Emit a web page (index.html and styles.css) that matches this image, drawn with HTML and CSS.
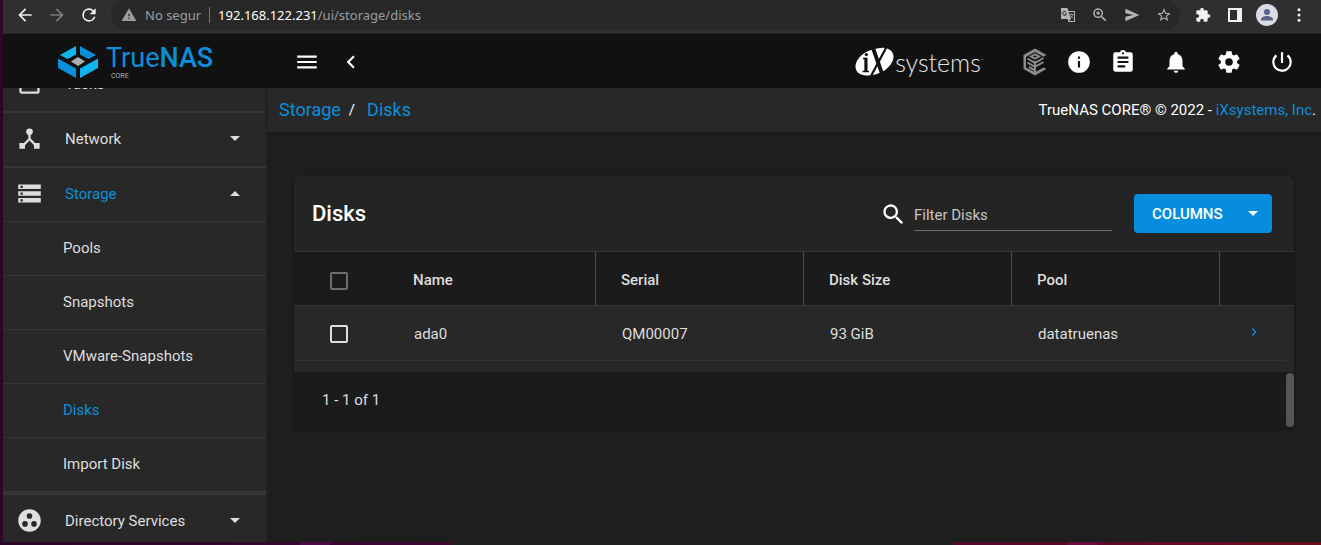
FILE: index.html
```
<!DOCTYPE html>
<html lang="en">
<head>
<meta charset="utf-8">
<title>TrueNAS - Disks</title>
<link rel="stylesheet" href="styles.css">
</head>
<body>
<div class="window">
  <div class="browser">
    <button class="b-btn" aria-label="Back"><svg viewBox="0 0 24 24"><path d="M20 11H7.8l5.6-5.6L12 4l-8 8 8 8 1.4-1.4L7.8 13H20z"/></svg></button>
    <button class="b-btn dim" aria-label="Forward"><svg viewBox="0 0 24 24"><path d="M12 4l-1.4 1.4L16.2 11H4v2h12.2l-5.6 5.6L12 20l8-8z"/></svg></button>
    <button class="b-btn" aria-label="Reload"><svg viewBox="0 0 24 24"><path d="M17.65 6.35A7.96 7.96 0 0 0 12 4a8 8 0 1 0 7.73 10h-2.08A6 6 0 1 1 12 6c1.66 0 3.14.69 4.22 1.78L13 11h7V4z"/></svg></button>
    <div class="address">
      <svg class="warn" viewBox="0 0 24 24"><path d="M1 21h22L12 2zm12-3h-2v-2h2zm0-4h-2v-4h2z"/></svg>
      <span class="insecure">No segur</span>
      <span class="url"><b>192.168.122.231</b>/ui/storage/disks</span>
      <span class="addr-tools">
        <button class="b-btn" aria-label="Translate"><svg class="soft" viewBox="0 0 16 16"><path d="M1 1h6.500l.9 3H15v11H8.500l-.9-3H1zM8.700 5l2.300 7-1.800 2H14V5z" fill-rule="evenodd"/><path d="M6.300 5.300A2 2 0 1 0 6.500 7H4.800" fill="none" stroke="#282828" stroke-width="1"/><path d="M9.500 7.500h4M11.500 6.500v1M12.800 7.500c-.3 1.500-1.200 2.500-2 3M10.500 8.500l2.500 3" fill="none" stroke="#b4b4b4" stroke-width=".8"/></svg></button>
        <button class="b-btn" aria-label="Zoom"><svg class="glass" viewBox="0 0 24 24"><path d="M15.500 14h-.79l-.28-.27A6.500 6.500 0 1 0 13.730 14.430l.27.28v.79l5 4.990L20.490 19zm-6 0a4.500 4.500 0 1 1 0-9 4.500 4.500 0 0 1 0 9zM10.300 7H8.700v1.700H7v1.600h1.700V12h1.600v-1.700H12V8.700h-1.700z"/></svg></button>
        <button class="b-btn" aria-label="Send"><svg class="soft" viewBox="0 0 24 24"><path d="M2 21.500L23 12 2 2.500V9.500L14 12 2 14.500z"/></svg></button>
        <button class="b-btn" aria-label="Bookmark"><svg class="soft" viewBox="0 0 24 24"><path d="M22 9.240l-7.190-.62L12 2 9.190 8.630 2 9.240l5.460 4.730L5.820 21 12 17.270 18.180 21l-1.630-7.030zM12 15.400l-3.760 2.270 1-4.280-3.320-2.880 4.380-.38L12 6.100l1.710 4.040 4.380.38-3.320 2.880 1 4.280z"/></svg></button>
      </span>
    </div>
    <button class="b-btn" aria-label="Extensions"><svg viewBox="0 0 24 24"><path d="M20.500 11H19V7a2 2 0 0 0-2-2h-4V3.500a2.500 2.500 0 0 0-5 0V5H4a2 2 0 0 0-2 2v3.800h1.500a2.700 2.700 0 0 1 0 5.400H2V20c0 1.100.9 2 2 2h3.800v-1.500a2.700 2.700 0 0 1 5.400 0V22H17a2 2 0 0 0 2-2v-4h1.500a2.500 2.500 0 0 0 0-5z"/></svg></button>
    <button class="b-btn" aria-label="Side panel"><svg viewBox="0 0 16 16"><path d="M1 1h14v14H1zm2 2v10h7V3z" fill-rule="evenodd"/></svg></button>
    <button class="avatar" aria-label="Profile"><svg viewBox="0 0 22 22"><circle cx="11" cy="11" r="11" fill="#dadce5"/><circle cx="11" cy="8" r="3" fill="#5a6285"/><path d="M5 16.500v-1c0-2 3-3.500 6-3.500s6 1.500 6 3.500v1z" fill="#5a6285"/></svg></button>
    <button class="b-btn last" aria-label="Menu"><svg viewBox="0 0 24 24"><circle cx="12" cy="5" r="2"/><circle cx="12" cy="12" r="2"/><circle cx="12" cy="19" r="2"/></svg></button>
  </div>

  <header class="topbar">
    <a class="brand" href="#">
      <svg class="brand-mark" viewBox="0 0 40 32">
        <path d="M18 0v8.500L9.500 13 2 9z" fill="#0db7ed"/><path d="M22 0v8.500l8.500 4.500L38 9z" fill="#0a8fdb"/>
        <path d="M0 12.500L18 22.500V32L0 22z" fill="#0a8fdb"/><path d="M40 12.500L22 22.500V32l18-10z" fill="#0db7ed"/>
        <path d="M20 11l7 4.500-7 4.500-7-4.500z" fill="#aeadae"/>
      </svg>
      <span class="brand-text"><span class="brand-name">True<b>NAS</b></span><span class="brand-sub">CORE</span></span>
    </a>
    <button class="t-btn" aria-label="Toggle menu"><svg viewBox="0 0 24 24"><path d="M3 18h18v-2H3zm0-5h18v-2H3zm0-7v2h18V6z"/></svg></button>
    <button class="t-btn" aria-label="Collapse"><svg viewBox="0 0 24 24"><path d="M15.410 7.410L14 6l-6 6 6 6 1.410-1.410L10.830 12z"/></svg></button>
    <a class="ix" href="#" aria-label="iXsystems">
      <svg class="ix-mark" viewBox="0 0 40 30">
        <path d="M26 1C33 0 38 4 38.500 9 39 17 29 28 13 28.500 5 29 .5 25 .5 19.500 1 10 12 2 26 1z" fill="#fff"/>
        <path d="M8 11.500h2.500V24M7.500 24.500h6.500" fill="none" stroke="#111" stroke-width="1.600"/><path d="M11 10.800V25" stroke="#111" stroke-width="3"/><circle cx="11.300" cy="7.600" r="1.600" fill="#111"/>
        <path d="M18 1l9.500 27" stroke="#111" stroke-width="3.800"/><path d="M31.500 0L16 29" stroke="#111" stroke-width="2.200"/>
      </svg>
      <span class="ix-name">systems</span><span class="ix-tm">™</span>
    </a>
    <button class="t-btn tool" aria-label="TrueCommand"><svg class="tc" viewBox="0 0 24 28"><path d="M12 .5L23.500 7l-3 1.800L12 4 3 9v10.500l9 4.800 8.500-4.800 3 1.500L12 27.500.5 21V7z" fill="#8b8b8b"/><path d="M12 5.200l6 3.300-6 3.300-6-3.300zm0 2.300l-2 1 2 1.100 2-1.100z" fill="#8b8b8b" fill-rule="evenodd"/><path d="M4.500 10.500l7.500 4.300 8.500-4.800M4.500 14.500l7.500 4.300 8.500-4.800M6 19l6 3.300M12 13v12" fill="none" stroke="#8b8b8b" stroke-width="2"/></svg></button>
    <button class="t-btn tool" aria-label="Info"><svg viewBox="0 0 24 24"><path d="M12 2a10 10 0 1 0 0 20 10 10 0 0 0 0-20zm1 15h-2v-6h2zm0-8h-2V7h2z"/></svg></button>
    <button class="t-btn tool" aria-label="Tasks"><svg viewBox="0 0 24 24"><path d="M19 3h-4.180C14.400 1.840 13.300 1 12 1s-2.400.84-2.820 2H5a2 2 0 0 0-2 2v14c0 1.100.9 2 2 2h14a2 2 0 0 0 2-2V5a2 2 0 0 0-2-2zm-7 0a1 1 0 1 1 0 2 1 1 0 0 1 0-2zm2 14H7v-2h7zm3-4H7v-2h10zm0-4H7V7h10z"/></svg></button>
    <span class="t-group">
      <button class="t-btn wide" aria-label="Alerts"><svg viewBox="0 0 24 24"><path d="M12 22a2 2 0 0 0 2-2h-4c0 1.100.89 2 2 2zm6-6v-5c0-3.070-1.640-5.640-4.500-6.320V4a1.500 1.500 0 0 0-3 0v.68C7.630 5.360 6 7.920 6 11v5l-2 2v1h16v-1z"/></svg></button>
      <button class="t-btn wide" aria-label="Settings"><svg viewBox="0 0 24 24"><path d="M19.430 12.980c.04-.32.07-.64.07-.98s-.03-.66-.07-.98l2.110-1.650c.19-.15.24-.42.12-.64l-2-3.460c-.12-.22-.39-.3-.61-.22l-2.490 1c-.52-.4-1.080-.73-1.690-.98l-.38-2.650C14.460 2.180 14.250 2 14 2h-4c-.25 0-.46.18-.49.42l-.38 2.650c-.61.25-1.170.59-1.690.98l-2.490-1c-.23-.09-.49 0-.61.22l-2 3.460c-.13.22-.07.49.12.64l2.110 1.650c-.04.32-.07.65-.07.98s.03.66.07.98l-2.110 1.650c-.19.15-.24.42-.12.64l2 3.460c.12.22.39.3.61.22l2.490-1c.52.4 1.080.73 1.690.98l.38 2.650c.03.24.24.42.49.42h4c.25 0 .46-.18.49-.42l.38-2.650c.61-.25 1.170-.59 1.690-.98l2.490 1c.23.09.49 0 .61-.22l2-3.460c.12-.22.07-.49-.12-.64zM12 15.500a3.500 3.500 0 1 1 0-7 3.500 3.500 0 0 1 0 7z"/></svg></button>
      <button class="t-btn wide" aria-label="Power"><svg viewBox="0 0 24 24"><path d="M13 3h-2v10h2zm4.830 2.170l-1.420 1.420A6.920 6.920 0 0 1 19 12a7 7 0 1 1-11.420-5.420L6.170 5.170A8.930 8.930 0 0 0 3 12a9 9 0 1 0 14.830-6.830z"/></svg></button>
    </span>
  </header>

  <div class="body">
    <nav class="side">
      <ul class="menu">
        <li><a href="#"><svg viewBox="0 0 24 24"><path d="M19 3H5a2 2 0 0 0-2 2v14c0 1.100.9 2 2 2h14a2 2 0 0 0 2-2V5a2 2 0 0 0-2-2zm0 16H5V8h14z"/></svg><span>Tasks</span></a></li>
        <li><a href="#"><svg viewBox="0 0 24 24"><path d="M17 16l-4-4V8.820C14.160 8.400 15 7.300 15 6a3 3 0 0 0-6 0c0 1.300.84 2.400 2 2.820V12l-4 4H3v5h5v-3.050l4-4.200 4 4.200V21h5v-5z"/></svg><span>Network</span><i class="caret"></i></a></li>
        <li class="open"><a class="active" href="#"><svg viewBox="0 0 24 24"><path d="M2 20h20v-4H2zm2-3h2v2H4zM2 4v4h20V4zm4 3H4V5h2zm-4 7h20v-4H2zm2-3h2v2H4z"/></svg><span>Storage</span><i class="caret up"></i></a>
          <ul class="sub">
            <li><a href="#">Pools</a></li>
            <li><a href="#">Snapshots</a></li>
            <li><a href="#">VMware-Snapshots</a></li>
            <li><a class="active" href="#">Disks</a></li>
            <li><a href="#">Import Disk</a></li>
          </ul>
        </li>
        <li><a href="#"><svg viewBox="0 0 24 24"><path d="M12 2a10 10 0 1 0 0 20 10 10 0 0 0 0-20zM8 17.500a2.500 2.500 0 1 1 0-5 2.500 2.500 0 0 1 0 5zM9.500 8a2.500 2.500 0 1 1 5 0 2.500 2.500 0 0 1-5 0zm6.500 9.500a2.500 2.500 0 1 1 0-5 2.500 2.500 0 0 1 0 5z"/></svg><span>Directory Services</span><i class="caret"></i></a></li>
      </ul>
    </nav>
    <main class="main">
      <div class="crumbs">
        <div class="trail"><a href="#">Storage</a><span>/</span><a href="#">Disks</a></div>
        <div class="copy">TrueNAS CORE® © 2022 - <a href="#">iXsystems, Inc</a>.</div>
      </div>
      <section class="card">
        <div class="card-head">
          <h1>Disks</h1>
          <svg class="search" viewBox="0 0 24 24"><path d="M15.500 14h-.79l-.28-.27A6.500 6.500 0 1 0 13.730 14.430l.27.28v.79l5 4.990L20.490 19zm-6 0a4.500 4.500 0 1 1 0-9 4.500 4.500 0 0 1 0 9z"/></svg>
          <input class="filter" type="text" aria-label="Filter Disks" placeholder="Filter Disks">
          <button class="columns">COLUMNS<i class="caret"></i></button>
        </div>
        <table class="grid">
          <colgroup><col class="c-check"><col><col><col><col><col class="c-more"></colgroup>
          <thead><tr><th><input class="dim" type="checkbox" aria-label="Select all"></th><th class="sep">Name</th><th class="sep">Serial</th><th class="sep">Disk Size</th><th class="sep">Pool</th><th></th></tr></thead>
          <tbody><tr><td><input type="checkbox" aria-label="Select ada0"></td><td>ada0</td><td>QM00007</td><td>93 GiB</td><td>datatruenas</td><td class="more"><button aria-label="Expand"><svg viewBox="0 0 24 24"><path d="M8.590 16.590L10 18l6-6-6-6-1.410 1.410L13.170 12z"/></svg></button></td></tr></tbody>
        </table>
        <div class="card-foot">1 - 1 of 1<span class="thumb"></span></div>
      </section>
    </main>
  </div>
</div>
</body>
</html>
```
FILE: styles.css
```
* { box-sizing: border-box; }
body {
  margin: 0;
  height: 100vh;
  overflow: hidden;
  padding: 0 0 3px 3px;
  font-family: Roboto, sans-serif;
  font-size: 15px;
  color: #dedede;
  background:
    linear-gradient(#202020, #202020) 451px 100% / 38% 3px no-repeat,
    linear-gradient(#4f0a4c, #4f0a4c) 300px 100% / 30px 3px no-repeat,
    linear-gradient(#690f40, #690f40) 1067px 100% / 30px 3px no-repeat,
    linear-gradient(90deg, #2d0628, #3c0733 30%, #55082c 75%, #68101d);
}
a { color: #0a8fdb; text-decoration: none; }
button { border: 0; padding: 0; margin: 0; background: none; font: inherit; color: inherit; }
svg { display: block; fill: currentColor; }
ul { list-style: none; margin: 0; padding: 0; }
.window { height: 100%; display: flex; flex-direction: column; background: #1e1e1e; overflow: hidden; }

.browser {
  flex: none;
  display: flex;
  align-items: center;
  height: 34px;
  padding: 0 6px 4px 6px;
  background: #2f2f2f;
  border-bottom: 1px solid #242424;
  font-family: "Noto Sans", sans-serif;
  font-size: 13px;
  color: #f1f1f1;
}
.b-btn { flex: none; width: 32px; display: grid; place-items: center; }
.b-btn svg { width: 20px; height: 20px; }
.b-btn.dim { color: #7b7b7b; }
.address {
  flex: 1;
  display: flex;
  align-items: center;
  height: 30px;
  margin: 0 7px 0 6px;
  padding-left: 10px;
  background: #282828;
  border-radius: 15px;
  color: #9a9da1;
}
.b-btn svg.soft, .address .warn { width: 16px; height: 16px; }
.b-btn svg.soft, .b-btn svg.glass { color: #b4b4b4; }
.b-btn svg.glass { width: 18px; height: 18px; }
.insecure { margin-left: 8px; padding-right: 8px; border-right: 1px solid #777; line-height: 16px; }
.url { margin-left: 8px; }
.url b { font-weight: 400; color: #fff; }
.addr-tools { display: flex; margin-left: auto; }
.b-btn[aria-label="Extensions"] svg, .b-btn[aria-label="Side panel"] svg { width: 16px; height: 16px; }
.avatar { width: 32px; display: grid; place-items: center; }
.avatar svg { width: 22px; height: 22px; }
.b-btn.last svg { width: 18px; height: 18px; }

.topbar { flex: none; height: 54px; display: flex; align-items: center; padding: 2px 13px 0 0; background: #111; color: #fff; }
.brand { flex: none; width: 282px; display: flex; align-items: center; padding-left: 55px; }
.brand-mark { width: 40px; height: 32px; }
.brand-text { display: flex; flex-direction: column; margin-left: 8px; }
.brand-name { font-size: 27px; line-height: 28px; }
.brand-name b { font-weight: 500; }
.brand-sub { margin-left: 5px; font-size: 7px; line-height: 8px; color: #b0b0b0; }
.t-btn { flex: none; width: 44px; display: grid; place-items: center; }
.t-btn svg { width: 26px; height: 26px; }
.t-btn svg.tc { width: 24px; height: 28px; }
.ix { display: flex; align-items: center; margin-left: auto; margin-right: 29px; color: #fff; }
.ix-mark { width: 40px; height: 30px; }
.ix-name { font-family: Lato, sans-serif; font-weight: 300; font-size: 25px; line-height: 30px; color: #e6e6e6; }
.ix-tm { align-self: flex-start; padding-top: 9px; font-size: 5px; line-height: 8px; color: #999; }
.t-group { display: flex; margin-left: 4px; }
.t-btn.wide { width: 53px; }

.body { flex: 1; min-height: 0; display: flex; }
.side { flex: none; width: 264px; overflow: hidden; background: #282828; border-right: 1px solid #222; }
.menu { margin-top: -30px; }
.menu a { display: flex; align-items: center; height: 53px; padding: 0 26px 2px 13px; color: #dedede; }
.menu > li { border-bottom: 2px solid #363636; }
.menu > li.open { border-bottom-width: 4px; }
.menu svg { width: 27px; height: 27px; margin-right: 22px; }
.menu a.active { color: #0a8fdb; }
.menu a.active svg { color: #dedede; }
.sub li { border-top: 1px solid #363636; }
.menu .sub a { padding-left: 60px; }
.caret { width: 0; border: 5px solid transparent; border-top-color: currentColor; border-bottom: 0; margin-left: auto; }
.menu .caret { color: #dedede; }
.caret.up { border-top: 0; border-bottom: 5px solid #dedede; }

.main { flex: 1; min-width: 0; }
.crumbs { display: flex; align-items: center; justify-content: space-between; height: 44px; padding: 0 5px 1px 12px; background: #282828; color: #fff; box-shadow: 0 1px 2px #171717; }
.trail { display: flex; align-items: center; gap: 8px; font-size: 18px; }
.trail span { font-size: 15px; margin-right: 4px; }

.card { margin: 44px 27px 0; border-radius: 8px; background: #282828; box-shadow: 0 1px 3px #151515; }
.card-head { display: flex; align-items: center; height: 75px; padding: 0 22px 0 18px; background: #242424; border-radius: 8px 8px 0 0; }
.card-head h1 { margin: 0 auto 0 0; font-size: 22px; font-weight: 500; color: #fff; }
.search { width: 27px; height: 27px; margin: 2px 7px 0 0; color: #fff; }
.filter { width: 198px; height: 33px; margin-top: 2px; padding: 2px 0 0; border: 0; border-bottom: 1px solid #6c6c6c; background: none; font: inherit; color: #dedede; outline: 0; }
.filter::placeholder { color: #c4c4c4; opacity: 1; }
.columns { display: flex; align-items: center; height: 39px; width: 138px; margin-left: 22px; padding: 0 14px 0 18px; border-radius: 4px; background: #068ddd; color: #fff; font-weight: 500; }

.grid { width: 100%; table-layout: fixed; border-collapse: separate; border-spacing: 0; }
.c-check { width: 94px; }
.c-more { width: 74px; }
.grid th { height: 55px; padding: 2px 0 0 25px; text-align: left; font-weight: 500; background: #1b1b1b; border: solid #363636; border-width: 1px 0; }
.grid th.sep { border-right: 1px solid #4a4a4a; }
.grid td { height: 55px; padding: 1px 0 0 26px; }
.grid th:first-child { padding: 4px 0 0 36px; }
.grid td:first-child { padding-left: 36px; }
.grid tbody tr { background: linear-gradient(#333, #333) 0 100% / calc(100% - 8px) 1px no-repeat; }
.grid input { appearance: none; display: block; width: 18px; height: 18px; margin: 0; border: 2px solid #dedede; border-radius: 2px; }
.grid input.dim { border-color: #6d6d6d; }
.more svg { width: 16px; height: 16px; color: #0a8fdb; }
.card-foot { position: relative; height: 56px; margin-top: 11px; padding-left: 28px; line-height: 56px; background: #1b1b1b; border-radius: 0 0 8px 8px; }
.card-foot .thumb { position: absolute; top: 1px; right: 0; bottom: 1px; width: 8px; border-radius: 4px; background: #555; }
```
